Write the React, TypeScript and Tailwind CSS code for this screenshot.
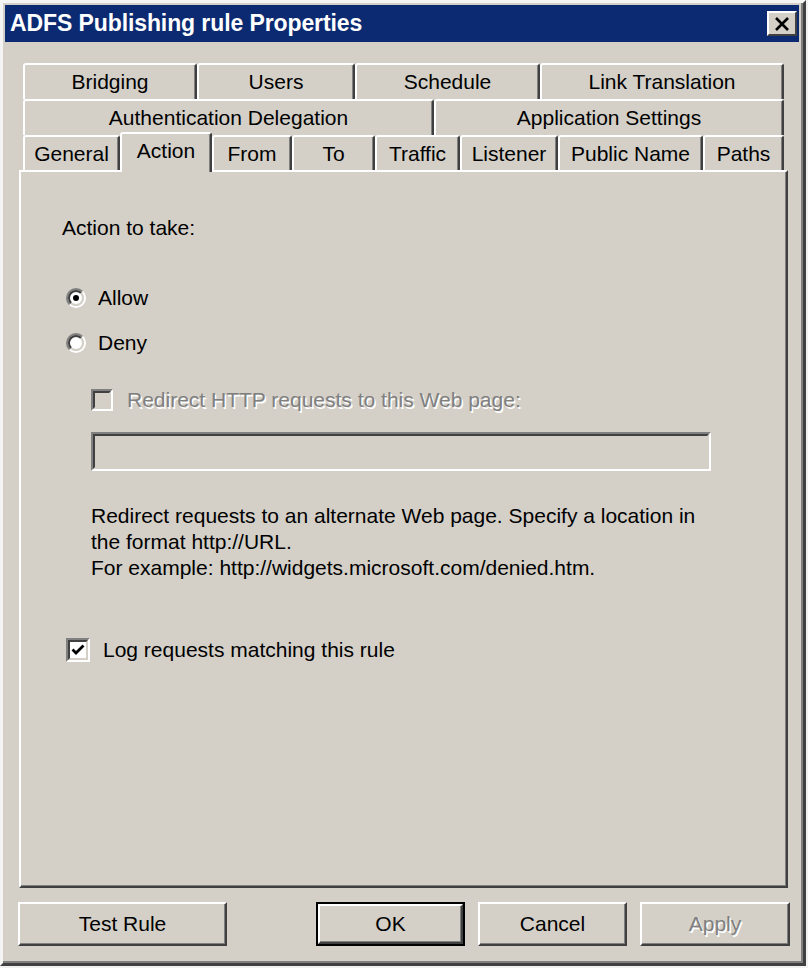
import React from "react";

const FONT = "font-['Liberation_Sans',Arial,sans-serif]";

function Tab({ label, w, selected }: { label: string; w: string; selected?: boolean }) {
  return (
    <div
      className={`${w} ${
        selected ? "h-[40px] -mb-[2px] relative z-10 pb-[5px]" : "h-full"
      } shrink-0 flex items-center justify-center bg-[#d4d0c8] border-t-2 border-l-2 border-t-white border-l-white border-r-2 border-r-[#404040] shadow-[inset_-1px_0_0_#808080] rounded-tl-[3px] rounded-tr-[3px] text-[21px] text-black whitespace-nowrap`}
    >
      {label}
    </div>
  );
}

function Radio({ checked }: { checked?: boolean }) {
  return (
    <div className="w-[20px] h-[20px] rounded-full border-2 border-t-[#808080] border-l-[#808080] border-b-white border-r-white shrink-0">
      <div className="w-full h-full rounded-full border-2 border-t-[#404040] border-l-[#404040] border-b-[#d4d0c8] border-r-[#d4d0c8] bg-white flex items-center justify-center">
        {checked && <div className="w-[6px] h-[6px] rounded-full bg-black" />}
      </div>
    </div>
  );
}

function Button({ label, w, isDefault, disabled }: { label: string; w: string; isDefault?: boolean; disabled?: boolean }) {
  const inner = (
    <div className="w-full h-full border-t-2 border-l-2 border-t-white border-l-white border-r-2 border-b-2 border-r-[#404040] border-b-[#404040] shadow-[inset_-1px_-1px_0_#808080] flex items-center justify-center">
      <span
        className={`text-[21px] ${
          disabled ? "text-[#808080] [text-shadow:1.5px_1.5px_0_#ffffff]" : "text-black"
        }`}
      >
        {label}
      </span>
    </div>
  );
  return (
    <div className={`${w} h-[44px] bg-[#d4d0c8] ${isDefault ? "border-2 border-black" : ""}`}>{inner}</div>
  );
}

export default function App() {
  return (
    <div className={`w-[808px] h-[968px] bg-[#f2f2f2] ${FONT}`}>
      <div className="w-[806px] h-[966px] bg-[#d4d0c8] border-t-[3px] border-l-[3px] border-t-[#f4f4f4] border-l-[#f4f4f4] border-r-[3px] border-b-[3px] border-r-[#404040] border-b-[#404040] shadow-[inset_-2px_-2px_0_#808080] p-[2px] flex flex-col">
        {/* Title bar */}
        <div className="h-[37px] w-[794px] bg-[#0b2a72] flex items-center justify-between pl-[5px] pr-[2px]">
          <span className="text-white font-bold text-[23px] tracking-[-0.1px] leading-none">
            ADFS Publishing rule Properties
          </span>
          <div className="w-[30px] h-[25px] bg-[#d4d0c8] border-t-2 border-l-2 border-t-white border-l-white border-r-2 border-b-2 border-r-[#404040] border-b-[#404040] flex items-center justify-center">
            <svg width="16" height="14" viewBox="0 0 16 14">
              <path d="M2 1 L14 13 M14 1 L2 13" stroke="#000" strokeWidth="2.6" />
            </svg>
          </div>
        </div>

        {/* Tabs */}
        <div className="mt-[21px] ml-[18px] w-[761px] flex flex-col">
          <div className="flex h-[36px]">
            <Tab label="Bridging" w="w-[174px]" />
            <Tab label="Users" w="w-[158px]" />
            <Tab label="Schedule" w="w-[185px]" />
            <Tab label="Link Translation" w="w-[244px]" />
          </div>
          <div className="flex h-[36px]">
            <Tab label="Authentication Delegation" w="w-[411px]" />
            <Tab label="Application Settings" w="w-[350px]" />
          </div>
          <div className="flex h-[35px] items-end">
            <Tab label="General" w="w-[97px]" />
            <Tab label="Action" w="w-[92px]" selected />
            <Tab label="From" w="w-[80px]" />
            <Tab label="To" w="w-[83px]" />
            <Tab label="Traffic" w="w-[85px]" />
            <Tab label="Listener" w="w-[98px]" />
            <Tab label="Public Name" w="w-[145px]" />
            <Tab label="Paths" w="w-[81px]" />
          </div>
        </div>

        {/* Panel */}
        <div className="ml-[14px] w-[769px] h-[718px] border-t-2 border-l-2 border-t-white border-l-white border-r-2 border-b-2 border-r-[#404040] border-b-[#404040] shadow-[inset_-1px_-1px_0_#808080] flex flex-col text-[21px] text-black">
          <div className="ml-[41px] mt-[44px] h-[24px] leading-[24px]">Action to take:</div>

          <div className="ml-[45px] mt-[46px] h-[24px] flex items-center gap-[12px]">
            <Radio checked />
            <span className="leading-[24px]">Allow</span>
          </div>
          <div className="ml-[45px] mt-[21px] h-[24px] flex items-center gap-[12px]">
            <Radio />
            <span className="leading-[24px]">Deny</span>
          </div>

          <div className="ml-[70px] mt-[33px] h-[24px] flex items-center gap-[14px]">
            <div className="w-[22px] h-[22px] border-2 border-t-[#808080] border-l-[#808080] border-b-white border-r-white">
              <div className="w-full h-full border-2 border-t-[#404040] border-l-[#404040] border-b-[#d4d0c8] border-r-[#d4d0c8] bg-[#d4d0c8]" />
            </div>
            <span className="leading-[24px] text-[#808080] [text-shadow:1.5px_1.5px_0_#ffffff]">
              Redirect HTTP requests to this Web page:
            </span>
          </div>

          <div className="ml-[70px] mt-[20px] w-[620px] h-[39px] border-2 border-t-[#808080] border-l-[#808080] border-b-white border-r-white">
            <div className="w-full h-full border-2 border-t-[#404040] border-l-[#404040] border-b-[#d4d0c8] border-r-[#d4d0c8] bg-[#d4d0c8]" />
          </div>

          <div className="ml-[70px] mt-[32px] leading-[26px]">
            Redirect requests to an alternate Web page. Specify a location in
            <br />
            the format http://URL.
            <br />
            For example: http://widgets.microsoft.com/denied.htm.
          </div>

          <div className="ml-[45px] mt-[57px] h-[24px] flex items-center gap-[13px]">
            <div className="w-[24px] h-[24px] border-2 border-t-[#808080] border-l-[#808080] border-b-white border-r-white shrink-0">
              <div className="w-full h-full border-2 border-t-[#404040] border-l-[#404040] border-b-[#d4d0c8] border-r-[#d4d0c8] bg-white flex items-center justify-center">
                <svg width="14" height="14" viewBox="0 0 14 14">
                  <path d="M1.5 6.5 L5 10 L12.5 2.5" stroke="#000" strokeWidth="2.8" fill="none" />
                </svg>
              </div>
            </div>
            <span className="leading-[24px]">Log requests matching this rule</span>
          </div>
        </div>

        {/* Buttons */}
        <div className="mt-[14px] ml-[13px] w-[772px] flex">
          <Button label="Test Rule" w="w-[209px]" />
          <div className="ml-auto flex gap-[13px]">
            <Button label="OK" w="w-[149px]" isDefault />
            <Button label="Cancel" w="w-[149px]" />
            <Button label="Apply" w="w-[150px]" disabled />
          </div>
        </div>
      </div>
    </div>
  );
}
